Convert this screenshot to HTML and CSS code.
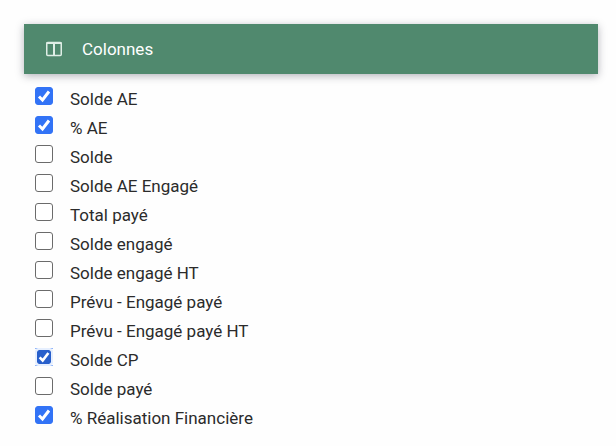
FILE: index.html
```html
<!DOCTYPE html>
<html lang="fr">
<head>
    <meta charset="UTF-8">
    <title>Colonnes</title>
    <link rel="stylesheet" href="styles.css">
</head>

<body>

<div class="panel">

    <h1 class="header">
        <svg class="headerIcon" width="16" height="16" viewBox="0 0 16 16" aria-hidden="true">
            <rect x="0.75" y="1.5" width="14.5" height="13" rx="1" fill="none" stroke="currentColor" stroke-width="1.5"/>
            <path d="M0.5 2h15M8 2v12" fill="none" stroke="currentColor" stroke-width="2"/>
        </svg>
        Colonnes
    </h1>

    <ul class="columnList">
        <li><label class="column"><input type="checkbox" class="columnCheck" checked>Solde AE</label></li>
        <li><label class="column"><input type="checkbox" class="columnCheck" checked>% AE</label></li>
        <li><label class="column"><input type="checkbox" class="columnCheck">Solde</label></li>
        <li><label class="column"><input type="checkbox" class="columnCheck">Solde AE Engagé</label></li>
        <li><label class="column"><input type="checkbox" class="columnCheck">Total payé</label></li>
        <li><label class="column"><input type="checkbox" class="columnCheck">Solde engagé</label></li>
        <li><label class="column"><input type="checkbox" class="columnCheck">Solde engagé HT</label></li>
        <li><label class="column"><input type="checkbox" class="columnCheck">Prévu - Engagé payé</label></li>
        <li><label class="column"><input type="checkbox" class="columnCheck">Prévu - Engagé payé HT</label></li>
        <li><label class="column"><input type="checkbox" class="columnCheck active" checked>Solde CP</label></li>
        <li><label class="column"><input type="checkbox" class="columnCheck">Solde payé</label></li>
        <li><label class="column"><input type="checkbox" class="columnCheck" checked>% Réalisation Financière</label></li>
    </ul>

</div>

</body>
</html>
```

FILE: styles.css
```css
body {
    margin: 0;
    background-color: #fefefe;
    color: #2b2b2b;
    font-family: Roboto, "Liberation Sans", sans-serif;
    font-size: 17px;
}

.panel {
    padding: 24px 18px 0 24px;
}

.header {
    display: flex;
    align-items: center;
    gap: 20px;
    height: 50px;
    margin: 0;
    padding: 0 22px;
    background-color: #50896e;
    color: white;
    box-shadow: 0 2px 8px rgba(40, 40, 60, 0.35);
    font-size: 17px;
    font-weight: 400;
}

.headerIcon {
    color: #dfeee6;
}

.columnList {
    margin: 0;
    padding: 11px 11px 0;
    list-style: none;
}

.column {
    display: flex;
    align-items: flex-start;
    gap: 17px;
    height: 29px;
    line-height: 29px;
}

.columnCheck {
    appearance: none;
    box-sizing: border-box;
    width: 18px;
    height: 18px;
    margin: 2px 0 0;
    border: 1px solid #6b6b6b;
    border-radius: 3px;
    background-color: white;
}

.columnCheck:checked {
    border-color: #3273f6;
    background: #3273f6 url("data:image/svg+xml,%3Csvg xmlns='http://www.w3.org/2000/svg' viewBox='0 0 16 16'%3E%3Cpath d='M3 8.500l3.500 3.500L13 3.500' fill='none' stroke='white' stroke-width='3'/%3E%3C/svg%3E") center / 16px 16px no-repeat;
}

/* pressed box: darker, with a thin ring that shows at the corners */
.columnCheck.active {
    border: 2px solid #e6effe;
    border-radius: 4px;
    background-color: #285fcb;
    background-clip: padding-box;
    background-size: 14px 14px;
}

.column:has(.active) {
    background:
        linear-gradient(#8fb4fa, #8fb4fa) 0 2px / 3px 1px no-repeat,
        linear-gradient(#8fb4fa, #8fb4fa) 15px 2px / 3px 1px no-repeat,
        linear-gradient(#8fb4fa, #8fb4fa) 0 19px / 3px 1px no-repeat,
        linear-gradient(#8fb4fa, #8fb4fa) 15px 19px / 3px 1px no-repeat;
}
```
